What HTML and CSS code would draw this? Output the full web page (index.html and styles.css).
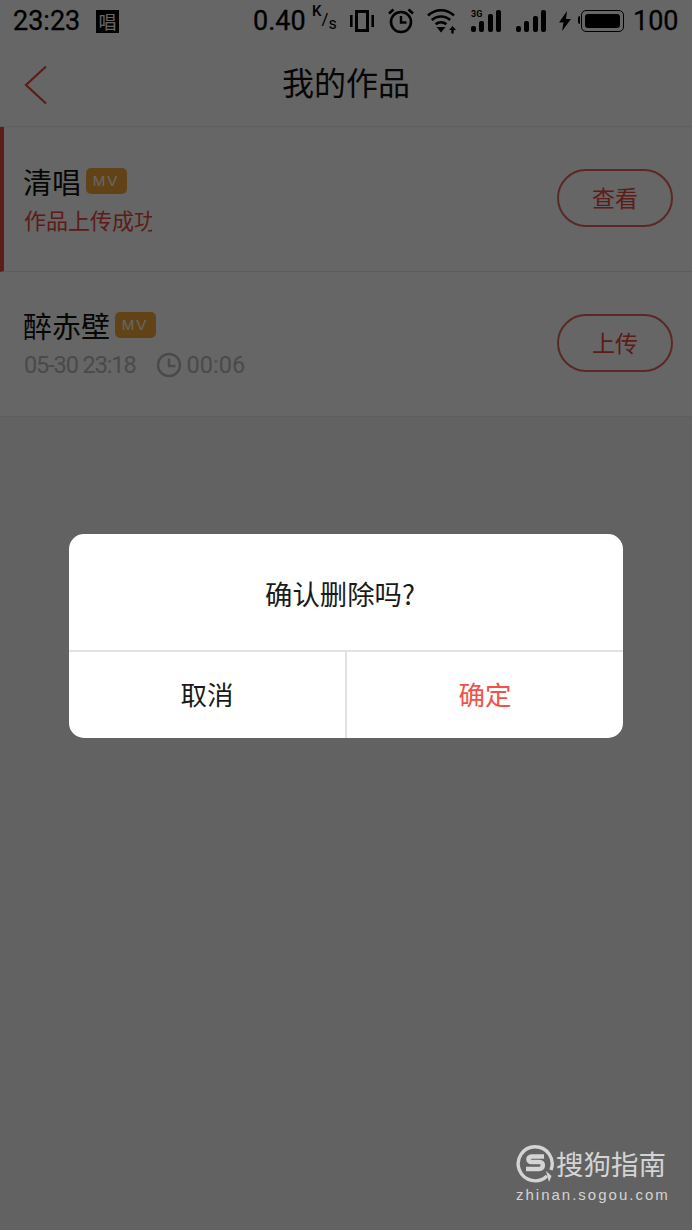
FILE: index.html
```html
<!DOCTYPE html>
<html lang="zh-CN">
<head>
  <meta charset="UTF-8" />
  <meta name="viewport" content="width=device-width, initial-scale=1.0" />
  <title>我的作品</title>
  <link rel="stylesheet" href="styles.css">
</head>
<body>
  <div class="page">
    <!-- Status bar -->
    <div class="statusbar">
      <span class="clock">23:23</span>
      <span class="app-badge">唱</span>
      <span class="speed">0.40</span>
      <span class="speed-unit"><sup>K</sup>/<sub>s</sub></span>
      <svg class="ic ic-vibrate" width="24" height="24" viewBox="0 0 24 24">
        <rect x="6.500" y="2.500" width="11" height="19" fill="none" stroke="#000" stroke-width="3"/>
        <rect x="0" y="6" width="2.600" height="12" fill="#000"/>
        <rect x="21.400" y="6" width="2.600" height="12" fill="#000"/>
      </svg>
      <svg class="ic ic-alarm" width="26" height="26" viewBox="0 0 26 26">
        <circle cx="13" cy="14" r="10" fill="none" stroke="#000" stroke-width="2.600"/>
        <path d="M13 8v6.500h5.500" fill="none" stroke="#000" stroke-width="2.400"/>
        <path d="M1 5.500 5.500 1.500M25 5.500 20.500 1.500" fill="none" stroke="#000" stroke-width="2.600"/>
      </svg>
      <svg class="ic ic-wifi" width="31" height="26" viewBox="0 0 31 26">
        <path d="M1 7.500C8.500 .5 19.500 .5 27 7.500M4.800 12C10 7.300 18 7.300 23.200 12M8.600 16.300C11.800 13.600 16.200 13.600 19.400 16.300" fill="none" stroke="#000" stroke-width="2.700"/>
        <path d="M9.500 19h9L14 24.500z" fill="#000"/>
        <path d="M25.500 18l3.500 4h-2.300v3.500h-2.400V22H22z" fill="#000"/>
      </svg>
      <span class="signal signal-3g">
        <span class="net-label">3G</span>
        <i class="bar b1"></i><i class="bar b2"></i><i class="bar b3"></i><i class="bar b4"></i>
      </span>
      <span class="signal signal-plain">
        <i class="bar b1"></i><i class="bar b2"></i><i class="bar b3"></i><i class="bar b4"></i>
      </span>
      <svg class="ic ic-bolt" width="12" height="20" viewBox="0 0 12 20">
        <path d="M8 0 0 11.500h4.500L3 20l9-12H7z" fill="#000"/>
      </svg>
      <span class="battery"><span class="battery-fill"></span></span>
      <span class="level">100</span>
    </div>

    <!-- Header -->
    <div class="header">
      <svg class="back" width="24" height="40" viewBox="0 0 24 40">
        <path d="M22 1.500 2 20l20 18.500" fill="none" stroke="#e5483f" stroke-width="2.200"/>
      </svg>
      <div class="title">我的作品</div>
    </div>

    <!-- Works list -->
    <div class="list">
      <div class="row row-active">
        <div class="row-info">
          <div class="row-name">清唱 <span class="tag">MV</span></div>
          <div class="row-status">作品上传成功</div>
        </div>
        <button class="row-btn">查看</button>
      </div>
      <div class="row">
        <div class="row-info">
          <div class="row-name">醉赤壁 <span class="tag">MV</span></div>
          <div class="row-meta">
            <span class="row-date">05-30 23:18</span>
            <svg class="ic-time" width="26" height="26" viewBox="0 0 26 26">
              <circle cx="13" cy="13" r="11" fill="none" stroke="#b8b8b8" stroke-width="2.400"/>
              <path d="M13 6.500V14h6.500" fill="none" stroke="#b8b8b8" stroke-width="2.400"/>
            </svg>
            <span>00:06</span>
          </div>
        </div>
        <button class="row-btn">上传</button>
      </div>
    </div>
  </div>

  <!-- Delete confirm dialog -->
  <div class="overlay">
    <div class="dialog">
      <div class="dialog-text">确认删除吗?</div>
      <div class="dialog-actions">
        <div class="dialog-btn">取消</div>
        <div class="dialog-btn dialog-btn-ok">确定</div>
      </div>
    </div>
  </div>

  <!-- Watermark -->
  <div class="watermark">
    <div class="wm-top">
      <svg width="39" height="40" viewBox="0 0 39 40">
        <path d="M31 33A17 17 0 1 1 35 27" fill="none" stroke="#d4d4d4" stroke-width="3.400"/>
        <path d="M30 28 33 39 35.500 33z" fill="#d4d4d4"/>
        <path d="M28 13.500H15.500c-4 0-4 5.500 0 5.500h8c4.500 0 4.500 7-.5 7H10" fill="none" stroke="#d4d4d4" stroke-width="4.600"/>
      </svg>
      <span class="wm-name">搜狗指南</span>
    </div>
    <div class="wm-url">zhinan.sogou.com</div>
  </div>
</body>
</html>
```

FILE: styles.css
```css
/* Overall page styling */
html, body {
  margin: 0;
  height: 100%;
}
body {
  position: relative;
  overflow: hidden;
  background-color: #f5f5f5;
  font-family: "Noto Sans CJK SC", "Noto Sans", sans-serif;
  color: #000;
}
.page {
  height: 100%;
}

/* Status bar */
.statusbar {
  display: flex;
  align-items: center;
  height: 42px;
  padding-left: 13px;
  background-color: #fff;
  font-family: Roboto, sans-serif;
  font-size: 27px;
  -webkit-text-stroke: 0.300px #000;
}
.clock {
  width: 83px;
}
.app-badge {
  width: 23px;
  height: 23px;
  margin-right: 134px;
  background-color: #000;
  color: #fff;
  font-family: "Noto Sans CJK SC", sans-serif;
  font-size: 18px;
  line-height: 23px;
  text-align: center;
  -webkit-text-stroke: 0;
}
.speed {
  width: 59px;
}
.speed-unit {
  display: flex;
  width: 24px;
  margin-right: 14px;
  font-size: 17px;
  line-height: 1;
  -webkit-text-stroke: 0;
}
.speed-unit sup { margin-top: -7px; vertical-align: baseline; font-size: 15px; font-weight: 500; }
.speed-unit sub { margin-top: 5px; vertical-align: baseline; font-size: 16px; }
.ic {
  flex: none;
}
.ic-vibrate { margin-right: 14px; }
.ic-alarm { margin-right: 13px; }
.ic-wifi { margin-right: 13px; }

/* Signal bars */
.signal {
  position: relative;
  display: flex;
  align-items: flex-end;
  justify-content: space-between;
  width: 30px;
  height: 22px;
  margin-right: 15px;
}
.signal-plain { margin-right: 13px; }
.bar {
  width: 5px;
  background-color: #000;
  border-radius: 2px;
}
.b1 { height: 6px; }
.b2 { height: 11px; }
.b3 { height: 16px; }
.b4 { height: 22px; }
.net-label {
  position: absolute;
  top: -1px;
  left: 0;
  font-size: 9px;
  font-weight: 700;
  line-height: 10px;
  -webkit-text-stroke: 0;
}
.signal-3g .b3 { height: 18px; }

.ic-bolt { margin-right: 10px; }
.battery {
  position: relative;
  display: block;
  box-sizing: border-box;
  width: 43px;
  height: 22px;
  margin-right: 9px;
  padding: 3px;
  border: 1.500px solid #000;
  border-radius: 5px;
}
/* Little nub on the left end of the battery */
.battery::before {
  content: '';
  position: absolute;
  top: 5px;
  left: -4px;
  width: 2px;
  height: 8px;
  background-color: #000;
  border-radius: 2px 0 0 2px;
}
.battery-fill {
  display: block;
  height: 100%;
  background-color: #000;
  border-radius: 3px;
}

/* Header */
.header {
  position: relative;
  display: flex;
  justify-content: center;
  align-items: flex-start;
  height: 84px;
  background-color: #fff;
  border-bottom: 1px solid #eee;
}
.back {
  position: absolute;
  top: 23px;
  left: 24px;
}
.title {
  font-size: 32px;
  line-height: 79px;
  color: #111;
}

/* Works list */
.row {
  display: flex;
  justify-content: space-between;
  align-items: center;
  box-sizing: border-box;
  height: 145px;
  padding: 0 19px 2px 23px;
  background-color: #fff;
  border-bottom: 1px solid #e8e8e8;
}
.row-active {
  padding-left: 19px;
  border-left: 4px solid #e5483f;
}
.row-name {
  display: flex;
  align-items: center;
  height: 40px;
  font-size: 29px;
  line-height: 40px;
  color: #111;
  white-space: pre;
}
.tag {
  width: 41px;
  height: 26px;
  margin-left: -2px;
  background-color: #f5a93a;
  border-radius: 5px;
  color: #fff;
  font-family: "Liberation Sans", sans-serif;
  font-size: 15px;
  letter-spacing: 2px;
  line-height: 26px;
  text-align: center;
}
/* The reference cuts this label off at 128px */
.row-status {
  width: 128px;
  margin: 2px 0 0 1px;
  overflow: hidden;
  color: #e5483f;
  font-size: 22px;
  line-height: 32px;
  white-space: nowrap;
}
.row-meta {
  display: flex;
  align-items: center;
  height: 32px;
  margin: 4px 0 0 1px;
  color: #b8b8b8;
  font-family: Roboto, sans-serif;
  font-size: 23.500px;
}
.row-date {
  letter-spacing: -1.100px;
}
.ic-time {
  margin: 0 5px 0 20px;
}
.row-btn {
  width: 116px;
  height: 58px;
  padding: 0 0 3px;
  background: none;
  border: 2px solid #e2675e;
  border-radius: 29px;
  color: #e5483f;
  font-family: "Noto Sans CJK SC", sans-serif;
  font-size: 23px;
}

/* Dim layer and dialog */
.overlay {
  position: absolute;
  top: 0;
  left: 0;
  right: 0;
  bottom: 0;
  display: flex;
  justify-content: center;
  align-items: flex-start;
  box-sizing: border-box;
  padding-top: 534px;
  background-color: rgba(0, 0, 0, 0.6);
}
.dialog {
  width: 554px;
  height: 204px;
  overflow: hidden;
  background-color: #fff;
  border-radius: 15px;
}
.dialog-text {
  height: 116px;
  padding-right: 12px;
  font-size: 27.400px;
  line-height: 118px;
  text-align: center;
  color: #1a1a1a;
}
.dialog-actions {
  display: flex;
  height: 88px;
  border-top: 2px solid #e2e2e2;
  box-sizing: border-box;
}
.dialog-btn {
  flex: 1;
  font-size: 26.500px;
  line-height: 84px;
  text-align: center;
  color: #1a1a1a;
}
.dialog-btn-ok {
  border-left: 2px solid #e2e2e2;
  color: #f0524a;
}

/* Watermark */
.watermark {
  position: absolute;
  top: 1143px;
  left: 516px;
  color: #d4d4d4;
}
.wm-top {
  display: flex;
  align-items: center;
  height: 40px;
}
.wm-name {
  margin-left: 1px;
  font-size: 27.500px;
  line-height: 40px;
  white-space: nowrap;
}
.wm-url {
  margin-top: 3px;
  font-family: "Liberation Sans", sans-serif;
  font-size: 15px;
  letter-spacing: 2px;
  line-height: 18px;
  white-space: nowrap;
}
```
